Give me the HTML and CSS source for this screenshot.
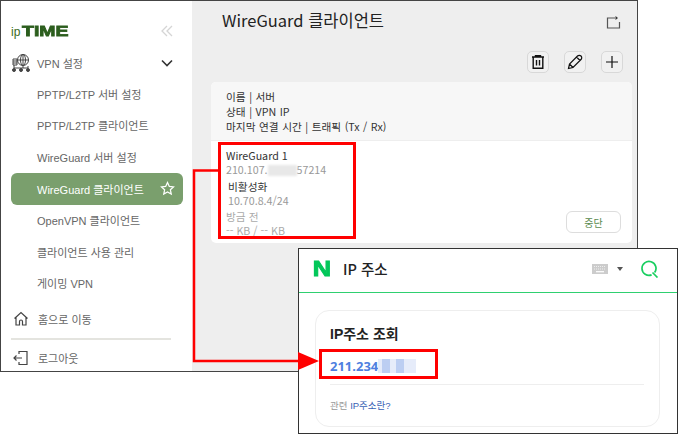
FILE: index.html
```html
<!DOCTYPE html>
<html lang="ko">
<head>
    <meta charset="UTF-8">
    <title>WireGuard 클라이언트</title>
    <link rel="stylesheet" href="styles.css">
</head>
<body>
    <div class="router-window">
        <aside class="sidebar">
            <div class="logo-row">
                <span class="logo"><span class="logo-ip">ip</span><span class="logo-time">TIME</span></span>
                <svg class="collapse" width="12" height="12" viewBox="0 0 12 12" fill="none" stroke="#d5d5d5" stroke-width="1.3"><path d="M6 1 1 6l5 5M11 1 6 6l5 5"/></svg>
            </div>
            <div class="menu-head">
                <svg class="menu-icon" width="20" height="20" viewBox="0 0 20 20" fill="none" stroke="#444" stroke-width="1"><circle cx="12" cy="7" r="5.5"/><ellipse cx="12" cy="7" rx="2.5" ry="5.5"/><path d="M6.5 7h11M12 1.500v11M2 6h4v6H2zM2 8h4M2 10h4M3 12v3M12 13v2M3 15h14M17 13v2"/><g fill="#444"><circle cx="3" cy="17" r="1.500"/><circle cx="10" cy="17" r="1.500"/><circle cx="17" cy="17" r="1.500"/></g></svg>
                <span>VPN 설정</span>
                <svg class="chevron" width="12" height="8" viewBox="0 0 12 8" fill="none" stroke="#333" stroke-width="1.600"><path d="M1 1.500 6 6.500l5-5"/></svg>
            </div>
            <ul class="submenu">
                <li>PPTP/L2TP 서버 설정</li>
                <li>PPTP/L2TP 클라이언트</li>
                <li>WireGuard 서버 설정</li>
                <li class="active">WireGuard 클라이언트
                    <svg width="15" height="15" viewBox="0 0 24 24" fill="none" stroke="#fff" stroke-width="2"><path d="m12 2.500 2.900 6.200 6.700.8-5 4.600 1.400 6.700-6-3.400-6 3.400 1.400-6.700-5-4.600 6.700-.8z"/></svg>
                </li>
                <li>OpenVPN 클라이언트</li>
                <li>클라이언트 사용 관리</li>
                <li>게이밍 VPN</li>
            </ul>
            <div class="nav-link home">
                <svg width="16" height="16" viewBox="0 0 16 16" fill="none" stroke="#444" stroke-width="1.200"><path d="M1.500 7.500 8 1.500l6.500 6M3 6.500V14h3.500v-3.500a1.500 1.500 0 0 1 3 0V14H13V6.500"/></svg>
                <span>홈으로 이동</span>
            </div>
            <div class="nav-link logout">
                <svg width="16" height="16" viewBox="0 0 16 16" fill="none" stroke="#444" stroke-width="1.200"><path d="M6 4V1.500h8v13H6V12M9 8H1M3.500 5.500 1 8l2.500 2.500"/></svg>
                <span>로그아웃</span>
            </div>
        </aside>

        <main class="content">
            <header class="content-head">
                <h1>WireGuard 클라이언트</h1>
                <svg class="share" width="15" height="14" viewBox="0 0 15 14" fill="none" stroke="#555" stroke-width="1.200"><path d="M9 3H1.500v10h12V7"/><path d="M9.500 1 12 3 9.500 5z" fill="#333" stroke="none"/></svg>
            </header>
            <div class="toolbar">
                <button class="icon-button">
                    <svg width="12" height="14" viewBox="0 0 12 14" fill="none" stroke="#111" stroke-width="1.400"><path d="M0 2h12M3.500 2V.7h5V2M1.200 2v11.300h9.600V2M4.500 5v5.500M7.500 5v5.500"/></svg>
                </button>
                <button class="icon-button">
                    <svg width="16" height="16" viewBox="0 0 16 16" fill="none" stroke="#111" stroke-width="1.200"><path d="M1.500 14.500 2.500 10 10.500 2a2 2 0 0 1 3.500 3.500L6 13.500zM9.500 3l3.500 3.500M2.500 10 6 13.500"/></svg>
                </button>
                <button class="icon-button">
                    <svg width="12" height="12" viewBox="0 0 12 12" fill="none" stroke="#111" stroke-width="1.200"><path d="M6 0v12M0 6h12"/></svg>
                </button>
            </div>
            <section class="client-card">
                <div class="card-legend">
                    <p>이름 | 서버</p>
                    <p>상태 | VPN IP</p>
                    <p>마지막 연결 시간 | 트래픽 (Tx / Rx)</p>
                </div>
                <div class="client-row">
                    <div class="client-info">
                        <p class="strong">WireGuard 1</p>
                        <p class="muted">210.107.<span class="smudge"></span>57214</p>
                        <div class="client-state">
                            <p class="strong">비활성화</p>
                            <p class="muted">10.70.8.4/24</p>
                        </div>
                        <p class="faint">방금 전</p>
                        <p class="faint">-- KB / -- KB</p>
                    </div>
                    <button class="stop-button">중단</button>
                </div>
            </section>
        </main>
    </div>

    <div class="naver-window">
        <header class="naver-head">
            <span class="naver-logo">N</span>
            <span class="naver-title">IP 주소</span>
            <svg class="keyboard" width="16" height="10" viewBox="0 0 16 10"><rect width="16" height="10" fill="#ccc"/><path d="M2 2.500h12M2 5h12" stroke="#eee" stroke-dasharray="1 1"/><path d="M4 7.700h8" stroke="#fff" stroke-width="1.200"/></svg>
            <span class="caret"></span>
            <svg class="search" width="18" height="18" viewBox="0 0 18 18" fill="none" stroke="#19ce60" stroke-width="1.700"><path d="M10.600 14.900a7 7 0 1 1 3-2.300M11.500 12.500l5 5"/></svg>
        </header>
        <section class="ip-card">
            <h2>IP주소 조회</h2>
            <div class="ip-value">211.234<span class="mosaic"><i></i><i></i></span></div>
            <p class="ip-link">관련 <span>IP주소란?</span></p>
        </section>
    </div>

    <!-- red callouts over both windows -->
    <div class="callout callout-client"></div>
    <div class="callout callout-ip"></div>
    <svg class="connector" width="135" height="200" viewBox="0 0 135 200" fill="none">
        <path d="M26 1.500H2V192H112" stroke="#f00" stroke-width="2.500"/>
        <path d="M106 183 127 192 106 201z" fill="#f00"/>
    </svg>
</body>
</html>
```

FILE: styles.css
```css
* {
    box-sizing: border-box;
}
html, body {
    margin: 0;
    height: 100%;
    background-color: #fff;
    overflow: hidden;
}
body {
    position: relative;
    font-family: "Noto Sans CJK KR", "Noto Sans", sans-serif;
}
p, h1, h2, ul {
    margin: 0;
    padding: 0;
}

/* router admin window */
.router-window {
    position: absolute;
    left: 0;
    top: 0;
    width: 638px;
    height: 372px;
    display: flex;
    border: 1px solid #444;
    overflow: hidden;
}
.sidebar {
    width: 191px;
    flex: none;
    padding-top: 19px;
    background-color: #fff;
    font-family: "Liberation Sans", "Noto Sans CJK KR", sans-serif;
    font-size: 11px;
    color: #666;
}
.logo-row {
    height: 21px;
    padding: 0 19px 0 10px;
    display: flex;
    align-items: center;
    justify-content: space-between;
}
.logo {
    display: flex;
    align-items: baseline;
    font-family: "Liberation Sans", sans-serif;
}
.logo-ip {
    font-size: 12px;
    color: #3a6b22;
}
.logo-time {
    margin-left: 2px;
    font-size: 15px;
    font-weight: 700;
    color: #2c5e1e;
    -webkit-text-stroke: 0.8px #2c5e1e;
    transform: scaleX(1.3);
    transform-origin: left;
}
.menu-head {
    height: 32px;
    margin-top: 6px;
    padding: 0 19px 0 10px;
    display: flex;
    align-items: center;
}
.menu-head span {
    margin-left: 6px;
    flex: 1;
}
.submenu {
    list-style: none;
    margin-top: -1px;
}
.submenu li {
    height: 31.500px;
    padding: 0 10px 0 36px;
    display: flex;
    align-items: center;
    justify-content: space-between;
}
.submenu li.active {
    height: 32px;
    margin: 0 9px 0 10px;
    padding: 0 8px 0 26px;
    background-color: #7a9f6d;
    border-radius: 6px;
    color: #fff;
}
.nav-link {
    height: 32px;
    padding-left: 12px;
    display: flex;
    align-items: center;
    gap: 9px;
}
.home {
    margin-top: 1px;
    height: 38px;
}
.logout {
    margin: 0 21px 0 10px;
    padding-left: 2px;
    height: 38px;
    border-top: 2px solid #e4e4df;
}

.content {
    flex: 1;
    padding: 0 5px 0 19px;
    background-color: #eee;
}
.content-head {
    height: 50px;
    padding: 0 11px 12px 11px;
    display: flex;
    align-items: center;
    justify-content: space-between;
}
.content-head h1 {
    font-size: 16.500px;
    font-weight: 400;
    color: #222;
}
.share {
    margin-top: 3px;
}
.toolbar {
    height: 31px;
    padding-right: 9px;
    display: flex;
    justify-content: flex-end;
    align-items: flex-start;
    gap: 15px;
}
.icon-button {
    width: 22px;
    height: 22px;
    padding: 0;
    display: flex;
    align-items: center;
    justify-content: center;
    background-color: #f1f1f1;
    border: 1px solid #d8d8d8;
    border-radius: 5px;
}
.client-card {
    height: 161px;
    background-color: #fff;
    border-radius: 5px;
    overflow: hidden;
    font-size: 10.700px;
}
.card-legend {
    height: 59px;
    padding: 7px 15px;
    background-color: #f7f7f7;
    border-bottom: 1px solid #eee;
    line-height: 15px;
    word-spacing: 0.5px;
    color: #333;
}
.client-row {
    display: flex;
    justify-content: space-between;
    align-items: flex-end;
    height: 102px;
    padding: 8px 11px 10px 15px;
}
.client-info {
    align-self: flex-start;
    line-height: 13px;
}
.client-state {
    margin: 4px 0 3px;
    padding-left: 2px;
}
.client-info p {
    height: 13.500px;
}
.client-info .muted {
    color: #999;
}
.client-info .faint {
    color: #aaa;
}
.client-info .strong {
    color: #333;
}
.smudge {
    display: inline-block;
    width: 29px;
    height: 11px;
    vertical-align: -2px;
    background-color: #e8e8e8;
    filter: blur(1px);
}
.stop-button {
    width: 55px;
    height: 22px;
    padding: 0;
    background-color: #fff;
    border: 1px solid #ddd;
    border-radius: 6px;
    font-family: inherit;
    font-size: 10px;
    color: #5a8a4e;
}

/* naver result window */
.naver-window {
    position: absolute;
    left: 298px;
    top: 248px;
    width: 380px;
    height: 186px;
    background-color: #fff;
    border: 1px solid #333;
    font-family: "Liberation Sans", "Noto Sans CJK KR", sans-serif;
}
.naver-head {
    height: 44px;
    padding: 0 18px 4px 14px;
    display: flex;
    align-items: center;
    border-bottom: 1px solid #2fd070;
}
.naver-logo {
    width: 18px;
    height: 17px;
    font-size: 22px;
    line-height: 17px;
    font-weight: 700;
    color: #03c75a;
    -webkit-text-stroke: 1px #03c75a;
    text-align: center;
    transform: scaleX(1.15);
}
.naver-title {
    margin-left: 12px;
    flex: 1;
    font-family: "Noto Sans CJK KR", sans-serif;
    font-size: 14.500px;
    font-weight: 500;
    color: #222;
}
.caret {
    margin: 1px 18px 0 9px;
    border: 3.500px solid transparent;
    border-top: 4px solid #555;
    border-bottom: 0;
}
.ip-card {
    margin: 17px 17px 0 16px;
    height: 117px;
    padding: 14px 15px 0 14px;
    border: 1px solid #eee;
    border-radius: 14px;
}
.ip-card h2 {
    font-size: 14px;
    font-weight: 700;
    line-height: 18px;
    color: #222;
}
.ip-value {
    margin-top: 13px;
    border-bottom: 1px solid #eee;
    height: 29px;
    font-family: "Noto Sans", sans-serif;
    font-size: 13px;
    line-height: 20px;
    font-weight: 700;
    color: #4e7fe0;
}
.mosaic {
    display: inline-flex;
    gap: 6px;
    width: 38px;
    height: 14px;
    padding-left: 4px;
    vertical-align: -2px;
    background-color: #e6ecfa;
    filter: blur(0.6px);
}
.mosaic i {
    width: 8px;
    background-color: #bccef2;
}
.ip-link {
    margin-top: 13px;
    font-size: 9.500px;
    color: #999;
}
.ip-link span {
    color: #3a62b5;
}

/* callouts */
.callout {
    position: absolute;
    border: 3px solid #f00;
}
.callout-client {
    left: 218px;
    top: 142px;
    width: 138px;
    height: 97px;
}
.callout-ip {
    left: 319px;
    top: 349px;
    width: 119px;
    height: 30px;
}
.connector {
    position: absolute;
    left: 192px;
    top: 169px;
    overflow: visible;
}
```
